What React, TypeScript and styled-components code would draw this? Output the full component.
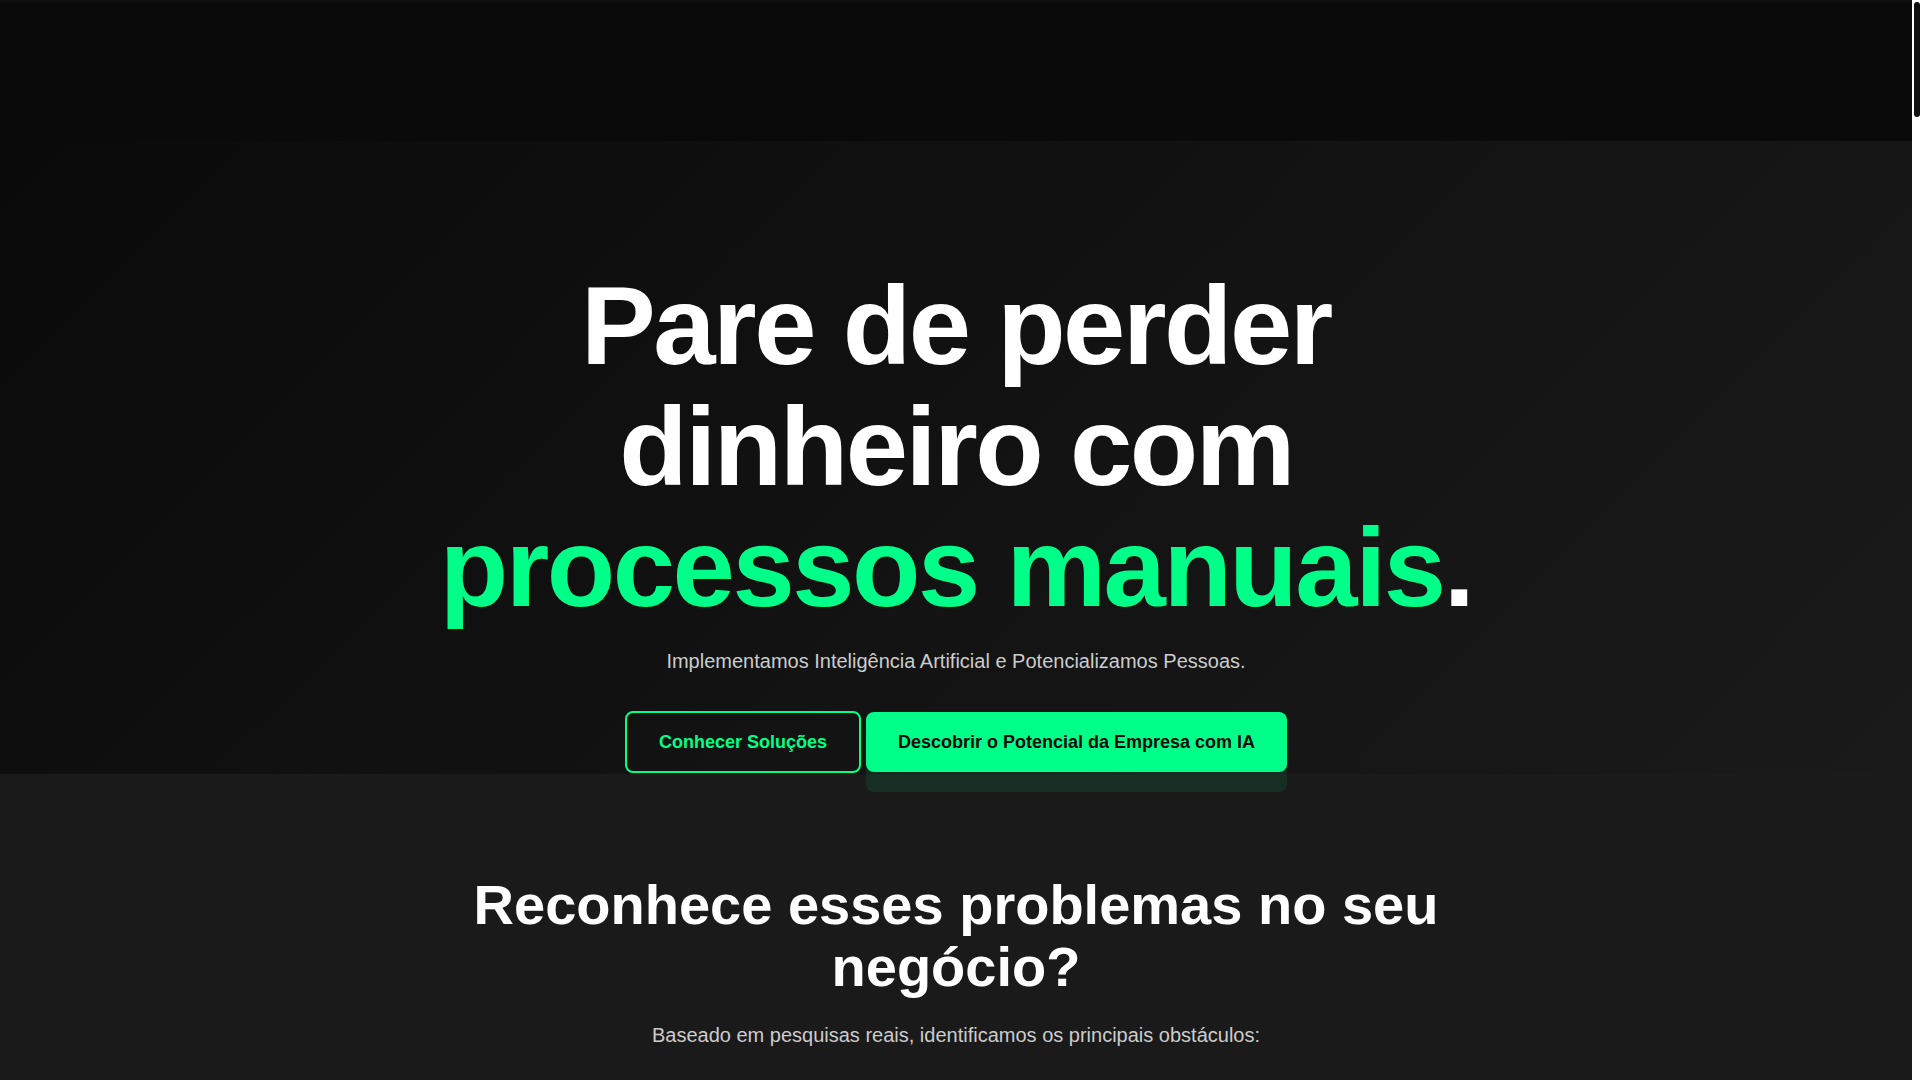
import styled, { createGlobalStyle } from 'styled-components'

const GlobalStyle = createGlobalStyle`
  html, body {
    margin: 0;
    padding: 0;
    background: #1a1a1a;
    font-family: "Liberation Sans", Arial, sans-serif;
  }

  *, *::before, *::after {
    box-sizing: border-box;
  }
`

const Page = styled.div`
  margin-right: 8px;
  background: #1a1a1a;
`

// drawn scroll indicator at the right edge of the window
const ScrollTrack = styled.div`
  position: fixed;
  top: 0;
  right: 0;
  bottom: 0;
  width: 8px;
  padding: 2px 0 0 2px;
  background: #ffffff;
  z-index: 10;
`

const ScrollThumb = styled.div`
  width: 6px;
  height: 115px;
  border-radius: 3px;
  background: #0f0f0f;
`

const Header = styled.header`
  height: 141px;
  background: #0a0a0a;
  border-top: 3px solid #0d0d0d;
`

const Hero = styled.section`
  background: linear-gradient(135deg, #0a0a0a 0%, #1a1a1a 100%);
  padding: 124px 0 1px;
  text-align: center;
`

const Container = styled.div`
  max-width: 1200px;
  margin: 0 auto;
  padding: 0 32px;
`

const Title = styled.h1`
  margin: 0 0 17px;
  font-size: 112px;
  font-weight: 700;
  line-height: 121px;
  letter-spacing: -0.022em;
  color: #ffffff;
`

const Highlight = styled.span`
  color: #00ff88;
`

const Lead = styled.p<{ $gap: number }>`
  margin: 0 0 ${({ $gap }) => $gap}px;
  font-size: 20px;
  line-height: 32px;
  color: #cccccc;
`

const Actions = styled.div`
  display: flex;
  justify-content: center;
  align-items: center;
  gap: 5px;
`

const OutlineButton = styled.button`
  padding: 18px 32px;
  border: 2px solid #00ff88;
  border-radius: 8px;
  background: transparent;
  color: #00ff88;
  font-family: inherit;
  font-size: 18px;
  font-weight: 700;
  line-height: 22px;
  cursor: pointer;
`

const PrimaryButton = styled.button`
  position: relative;
  z-index: 1;
  padding: 19px 32px;
  border: none;
  border-radius: 8px;
  background: #00ff88;
  color: #0a0a0a;
  font-family: inherit;
  font-size: 18px;
  font-weight: 700;
  line-height: 22px;
  box-shadow: 0 20px 0 rgba(0, 255, 136, 0.09);
  cursor: pointer;
`

const Problems = styled.section`
  min-height: 600px;
  padding: 100px 0 0;
  background: #1a1a1a;
  text-align: center;
`

const SectionTitle = styled.h2`
  margin: 0 0 22px;
  font-size: 56px;
  font-weight: 700;
  line-height: 1.1;
  color: #ffffff;
`

export default function App() {
  return (
    <Page>
      <GlobalStyle />
      <ScrollTrack>
        <ScrollThumb />
      </ScrollTrack>
      <Header />
      <Hero>
        <Container>
          <Title>
            Pare de perder dinheiro com <Highlight>processos manuais</Highlight>.
          </Title>
          <Lead $gap={34}>
            Implementamos Inteligência Artificial e Potencializamos Pessoas.
          </Lead>
          <Actions>
            <OutlineButton>Conhecer Soluções</OutlineButton>
            <PrimaryButton>Descobrir o Potencial da Empresa com IA</PrimaryButton>
          </Actions>
        </Container>
      </Hero>
      <Problems>
        <Container>
          <SectionTitle>Reconhece esses problemas no seu negócio?</SectionTitle>
          <Lead $gap={0}>
            Baseado em pesquisas reais, identificamos os principais obstáculos:
          </Lead>
        </Container>
      </Problems>
    </Page>
  )
}
